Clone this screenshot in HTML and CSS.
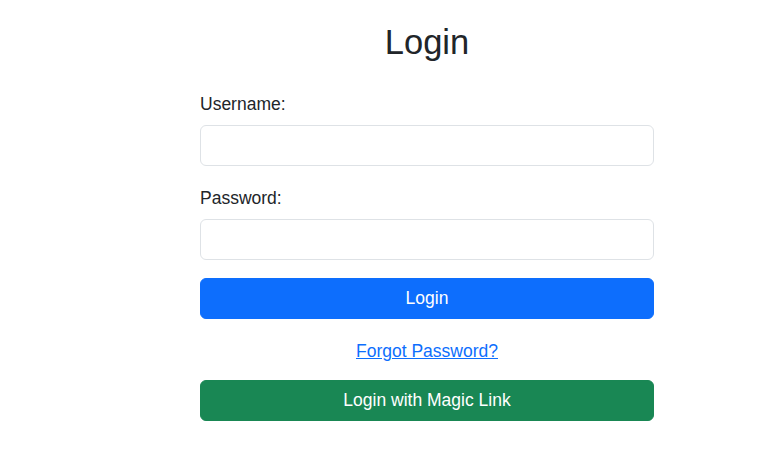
FILE: index.html
```html
<!DOCTYPE html>
<html lang="en">
<head>
<meta charset="utf-8">
<title>Login</title>
<link rel="stylesheet" href="styles.css">
</head>
<body>
<div class="page">
  <form class="login">
    <h1 class="title">Login</h1>
    <div class="field">
      <label class="label" for="username">Username:</label>
      <input class="input" id="username" type="text">
    </div>
    <div class="field field-2">
      <label class="label" for="password">Password:</label>
      <input class="input" id="password" type="password">
    </div>
    <button type="button" class="btn btn-primary">Login</button>
    <p class="forgot"><a href="#">Forgot Password?</a></p>
    <button type="button" class="btn btn-success">Login with Magic Link</button>
  </form>
</div>
</body>
</html>
```
FILE: styles.css
```css
* { box-sizing: border-box; }
html, body { margin: 0; padding: 0; background: #fff; }
body {
  font-family: "Liberation Sans", Arial, sans-serif;
  color: #212529;
  font-size: 17.5px;
  line-height: 25px;
}
.page { padding-top: 22px; }
.login {
  width: 454px;
  margin-left: 200px;
  display: flex;
  flex-direction: column;
}
.title {
  margin: 0 0 30px;
  text-align: center;
  font-size: 34.5px;
  line-height: 40px;
  font-weight: 500;
}
.field { display: flex; flex-direction: column; }
.field-2 { margin-top: 20px; }
.label { display: block; margin-bottom: 8px; }
.input {
  height: 41px;
  width: 100%;
  border: 1px solid #dee2e6;
  border-radius: 6px;
  padding: 6px 12px;
  font: inherit;
  background: #fff;
}
.btn {
  height: 41px;
  width: 100%;
  border: 1px solid transparent;
  border-radius: 6px;
  color: #fff;
  font: inherit;
  font-size: 17.5px;
  padding: 0 12px;
}
.btn-primary { background: #0d6efd; border-color: #0d6efd; margin-top: 18px; }
.btn-success { background: #198754; border-color: #198754; }
.forgot {
  margin: 20px 0 16px;
  text-align: center;
}
.forgot a { color: #0d6efd; text-decoration: underline; }
```
